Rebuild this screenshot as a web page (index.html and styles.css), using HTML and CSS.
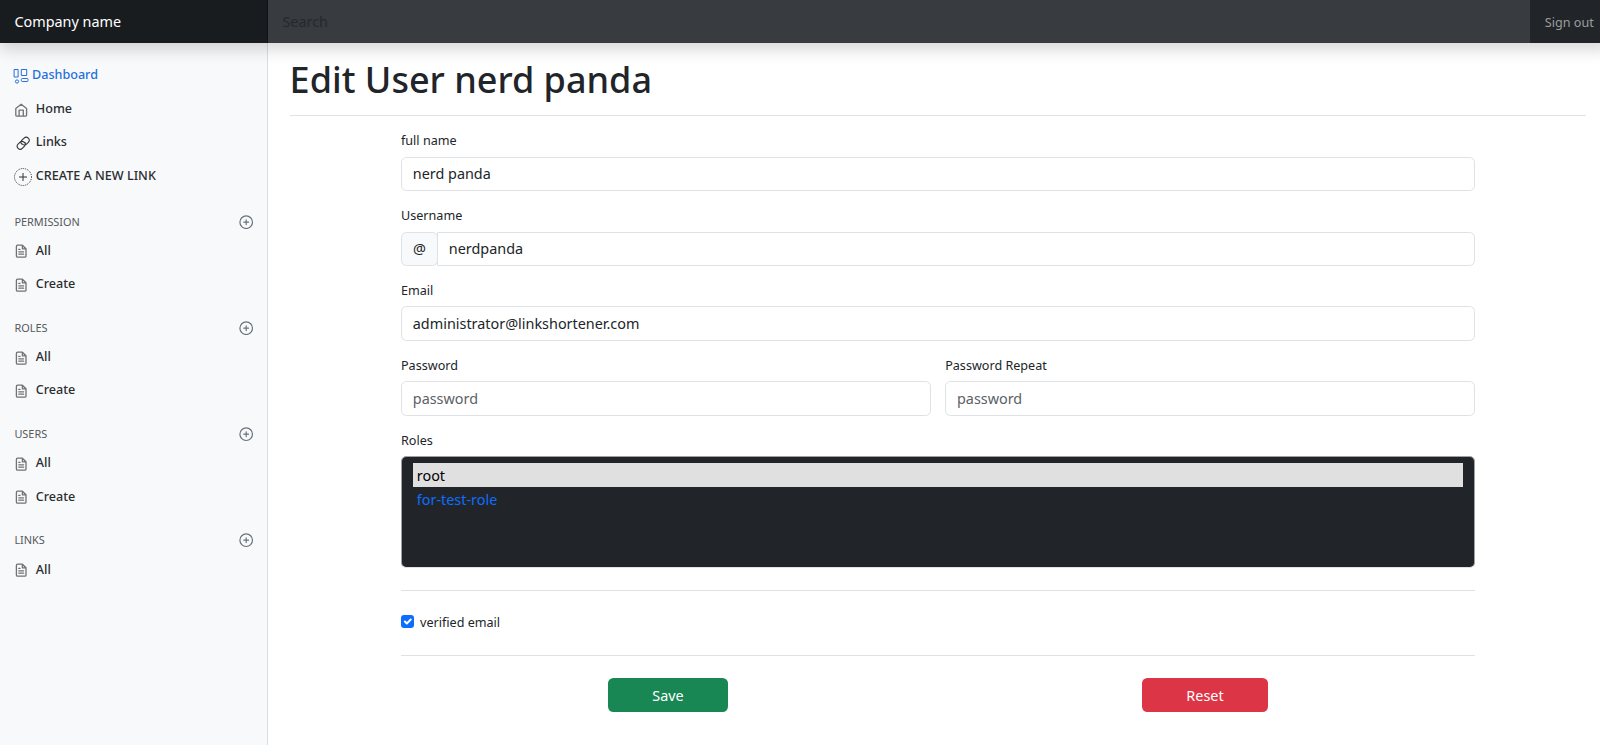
FILE: index.html
```html
<!DOCTYPE html>
<html lang="en">
<head>
<meta charset="utf-8">
<title>Edit User</title>
<link rel="stylesheet" href="styles.css">
</head>
<body>
<svg class="defs" width="0" height="0">
  <symbol id="file" viewBox="0 0 24 24"><path d="M14 2H6a2 2 0 0 0-2 2v16a2 2 0 0 0 2 2h12a2 2 0 0 0 2-2V8z M14 2v6h6 M16 13H8 M16 17H8 M10 9H8"/></symbol>
  <symbol id="plus" viewBox="0 0 24 24"><circle cx="12" cy="12" r="10.5"/><path d="M12 8v8M8 12h8"/></symbol>
</svg>
<div class="page">
  <header class="topbar">
    <a class="brand">Company name</a>
    <input class="search" type="text" placeholder="Search" aria-label="Search">
    <a class="signout">Sign out</a>
  </header>
  <div class="layout">
    <nav class="sidebar">
      <a class="link link-dash"><svg class="ico-dash" viewBox="0 0 16 15"><path d="M1.1.5h4v7.5h-4zM8.3.5h5.4v6H8.3z"/><rect x="8.3" y="9.5" width="6.7" height="3" rx="1"/><circle cx="4" cy="12.5" r="1.6"/></svg>Dashboard</a>
      <a class="link"><svg class="ico" viewBox="0 0 24 24"><path d="M3 9l9-7 9 7v11a2 2 0 0 1-2 2H5a2 2 0 0 1-2-2z M8.5 22V12h7v10"/></svg>Home</a>
      <a class="link"><svg class="ico ico-chain" viewBox="0 0 24 24"><path d="M10 13a5 5 0 0 0 7.54.54l3-3a5 5 0 0 0-7.07-7.07l-3.6 3.6a5 5 0 0 0-.6 6.3 M14 11a5 5 0 0 0-7.54-.54l-3 3a5 5 0 0 0 7.07 7.07l3.6-3.6a5 5 0 0 0 .6-6.3"/></svg>Links</a>
      <a class="link link-new"><svg class="ico-new" viewBox="0 0 18 18"><circle cx="9" cy="9" r="8.5"/><path d="M9 5v8M5 9h8"/></svg>CREATE A NEW LINK</a>
      <h6 class="group">PERMISSION<svg class="ico-plus"><use href="#plus"/></svg></h6>
      <a class="link"><svg class="ico"><use href="#file"/></svg>All</a>
      <a class="link"><svg class="ico"><use href="#file"/></svg>Create</a>
      <h6 class="group">ROLES<svg class="ico-plus"><use href="#plus"/></svg></h6>
      <a class="link"><svg class="ico"><use href="#file"/></svg>All</a>
      <a class="link"><svg class="ico"><use href="#file"/></svg>Create</a>
      <h6 class="group">USERS<svg class="ico-plus"><use href="#plus"/></svg></h6>
      <a class="link"><svg class="ico"><use href="#file"/></svg>All</a>
      <a class="link"><svg class="ico"><use href="#file"/></svg>Create</a>
      <h6 class="group">LINKS<svg class="ico-plus"><use href="#plus"/></svg></h6>
      <a class="link"><svg class="ico"><use href="#file"/></svg>All</a>
    </nav>
    <main class="main">
      <h1 class="title">Edit User nerd panda</h1>
      <form class="form">
        <div class="field"><label class="label">full name</label><input class="control" type="text" value="nerd panda"></div>
        <div class="field"><label class="label">Username</label>
          <div class="group-input"><span class="addon">@</span><input class="control control-joined" type="text" value="nerdpanda"></div></div>
        <div class="field"><label class="label">Email</label><input class="control" type="text" value="administrator@linkshortener.com"></div>
        <div class="pair">
          <div class="field"><label class="label">Password</label><input class="control" type="password" placeholder="password"></div>
          <div class="field"><label class="label">Password Repeat</label><input class="control" type="password" placeholder="password"></div>
        </div>
        <div class="field"><label class="label">Roles</label>
          <div class="listbox" role="listbox">
            <div class="option option-selected" role="option">root</div>
            <div class="option" role="option">for-test-role</div>
          </div></div>
        <div class="verify">
          <span class="check" role="checkbox" aria-checked="true"><svg class="tick" viewBox="0 0 20 20"><path d="m6 10 3 3 6-6"/></svg></span>verified email
        </div>
        <div class="actions">
          <div class="action"><button class="btn btn-save" type="button">Save</button></div>
          <div class="action"><button class="btn btn-reset" type="button">Reset</button></div>
        </div>
      </form>
    </main>
  </div>
</div>
</body>
</html>
```
FILE: styles.css
```css
* { box-sizing: border-box; }
html { font-size: 14.4px; }
body { margin: 0; height: 745px; overflow: hidden; background: #fff; color: #212529; font: 400 1rem/1.5 "Noto Sans", sans-serif; }
.defs { display: none; }
.page { width: 1610px; height: 745px; display: flex; flex-direction: column; }

.topbar { position: relative; z-index: 2; height: 43px; flex: none; display: flex; background: #212529; box-shadow: 0 7.2px 14.4px rgba(0,0,0,.15); }
.brand { width: 268px; padding: 0 14.4px; line-height: 43px; color: #fff; background: #191c1f; box-shadow: inset -1px 0 0 #0f1112; }
.search { flex: 1; min-width: 0; border: 0; border-radius: 0; outline: 0; padding: 0 14.4px; font: inherit; color: #fff; background: #383b3f; }
.search::placeholder { color: #25292d; opacity: 1; }
.signout { width: 80px; padding: 1px 0 0 14.8px; font-size: 12.6px; line-height: 43px; color: #9b9d9e; white-space: nowrap; }

.layout { flex: 1; display: flex; min-height: 0; }
.sidebar { width: 268px; flex: none; background: #f8f9fa; border-right: 1px solid #dcdddf; padding-top: 15.6px; }
.link { display: flex; align-items: center; height: 33.3px; padding-left: 14.2px; font-size: 12.6px; font-weight: 500; color: #2b2d30; }
.link-dash { height: 34.2px; color: #2470dc; padding-left: 13.4px; }
.link-new { height: 34.6px; padding-left: 13.8px; }
.ico { width: 14.4px; height: 14.4px; margin: 1px 7.2px 0 0; fill: none; stroke: #727272; stroke-width: 2.2; stroke-linecap: round; stroke-linejoin: round; }
.ico-chain { stroke: #333; stroke-width: 1.8; margin: 0 5.6px 0 1.6px; }
.ico-dash { width: 16px; height: 15px; margin: 2px 2.6px 0 0; fill: none; stroke: #2470dc; }
.ico-new { width: 18px; height: 18px; margin: 1px 4px 0 0; fill: none; stroke: #333; }
.ico-new circle { stroke-dasharray: 1 1; }
.group { display: flex; justify-content: space-between; align-items: center; height: 14.4px; margin: 19.8px 13.4px 5.5px 14.4px; font-size: 10.9px; font-weight: 400; color: #55585c; }
.link-new + .group { margin-top: 20.6px; }
.ico-plus { width: 14.4px; height: 14.4px; fill: none; stroke: #68727c; stroke-width: 2; stroke-linecap: round; }

.main { width: 1342px; padding: 15.4px 24px 0 22px; }
.title { margin: 0; height: 57.6px; border-bottom: 1px solid #dee2e6; font-size: 36px; font-weight: 500; line-height: 43.2px; text-indent: -0.4px; }
.form { width: 1074px; margin: 16.2px auto 0; }
.field { display: flex; flex-direction: column; margin-bottom: 16px; }
.label { height: 18.9px; margin-bottom: 5.6px; font-size: 12.6px; line-height: 18.9px; }
.control { width: 100%; height: 34.4px; padding: 0 10.8px; border: 1px solid #dee2e6; border-radius: 5.4px; outline: 0; font: inherit; color: #212529; background: #fff; }
.control::placeholder { color: #5c6166; opacity: 1; }
.group-input { display: flex; }
.addon { width: 37px; flex: none; height: 34.4px; line-height: 32.4px; text-align: center; border: 1px solid #dee2e6; border-radius: 5.4px; background: #f8f9fa; }
.control-joined { margin-left: -1px; border-radius: 0 5.4px 5.4px 0; }
.pair { display: grid; grid-template-columns: 1fr 1fr; gap: 14.4px; }
.listbox { height: 111.4px; padding: 5.6px 10.8px; border: 1px solid #9ea2a6; border-bottom-color: #dee2e6; border-radius: 5.4px; background: #212529; color: #0d6efd; }
.option { height: 24px; padding: 1px 4px 0; line-height: 24px; }
.option-selected { background: #e0e0e0; color: #000; }
.verify { display: flex; align-items: center; height: 66px; margin-top: 22.4px; padding-top: 1px; border: solid #dee2e6; border-width: 1px 0; font-size: 12.6px; }
.check { width: 13px; height: 13px; margin: -3px 6px 0 0; border-radius: 3px; background: #0d6efd; display: flex; }
.tick { width: 13px; height: 13px; fill: none; stroke: #fff; stroke-width: 3; stroke-linecap: round; stroke-linejoin: round; }
.actions { display: grid; grid-template-columns: 1fr 1fr; padding-top: 22px; margin: 0 1.5px 0 -1.5px; }
.action { display: flex; justify-content: center; }
.btn { height: 34.4px; padding: 1px 44.4px 0; border: 0; border-radius: 5.4px; font: inherit; color: #fff; }
.btn-save { background: #198754; }
.btn-reset { background: #dc3545; }
```
